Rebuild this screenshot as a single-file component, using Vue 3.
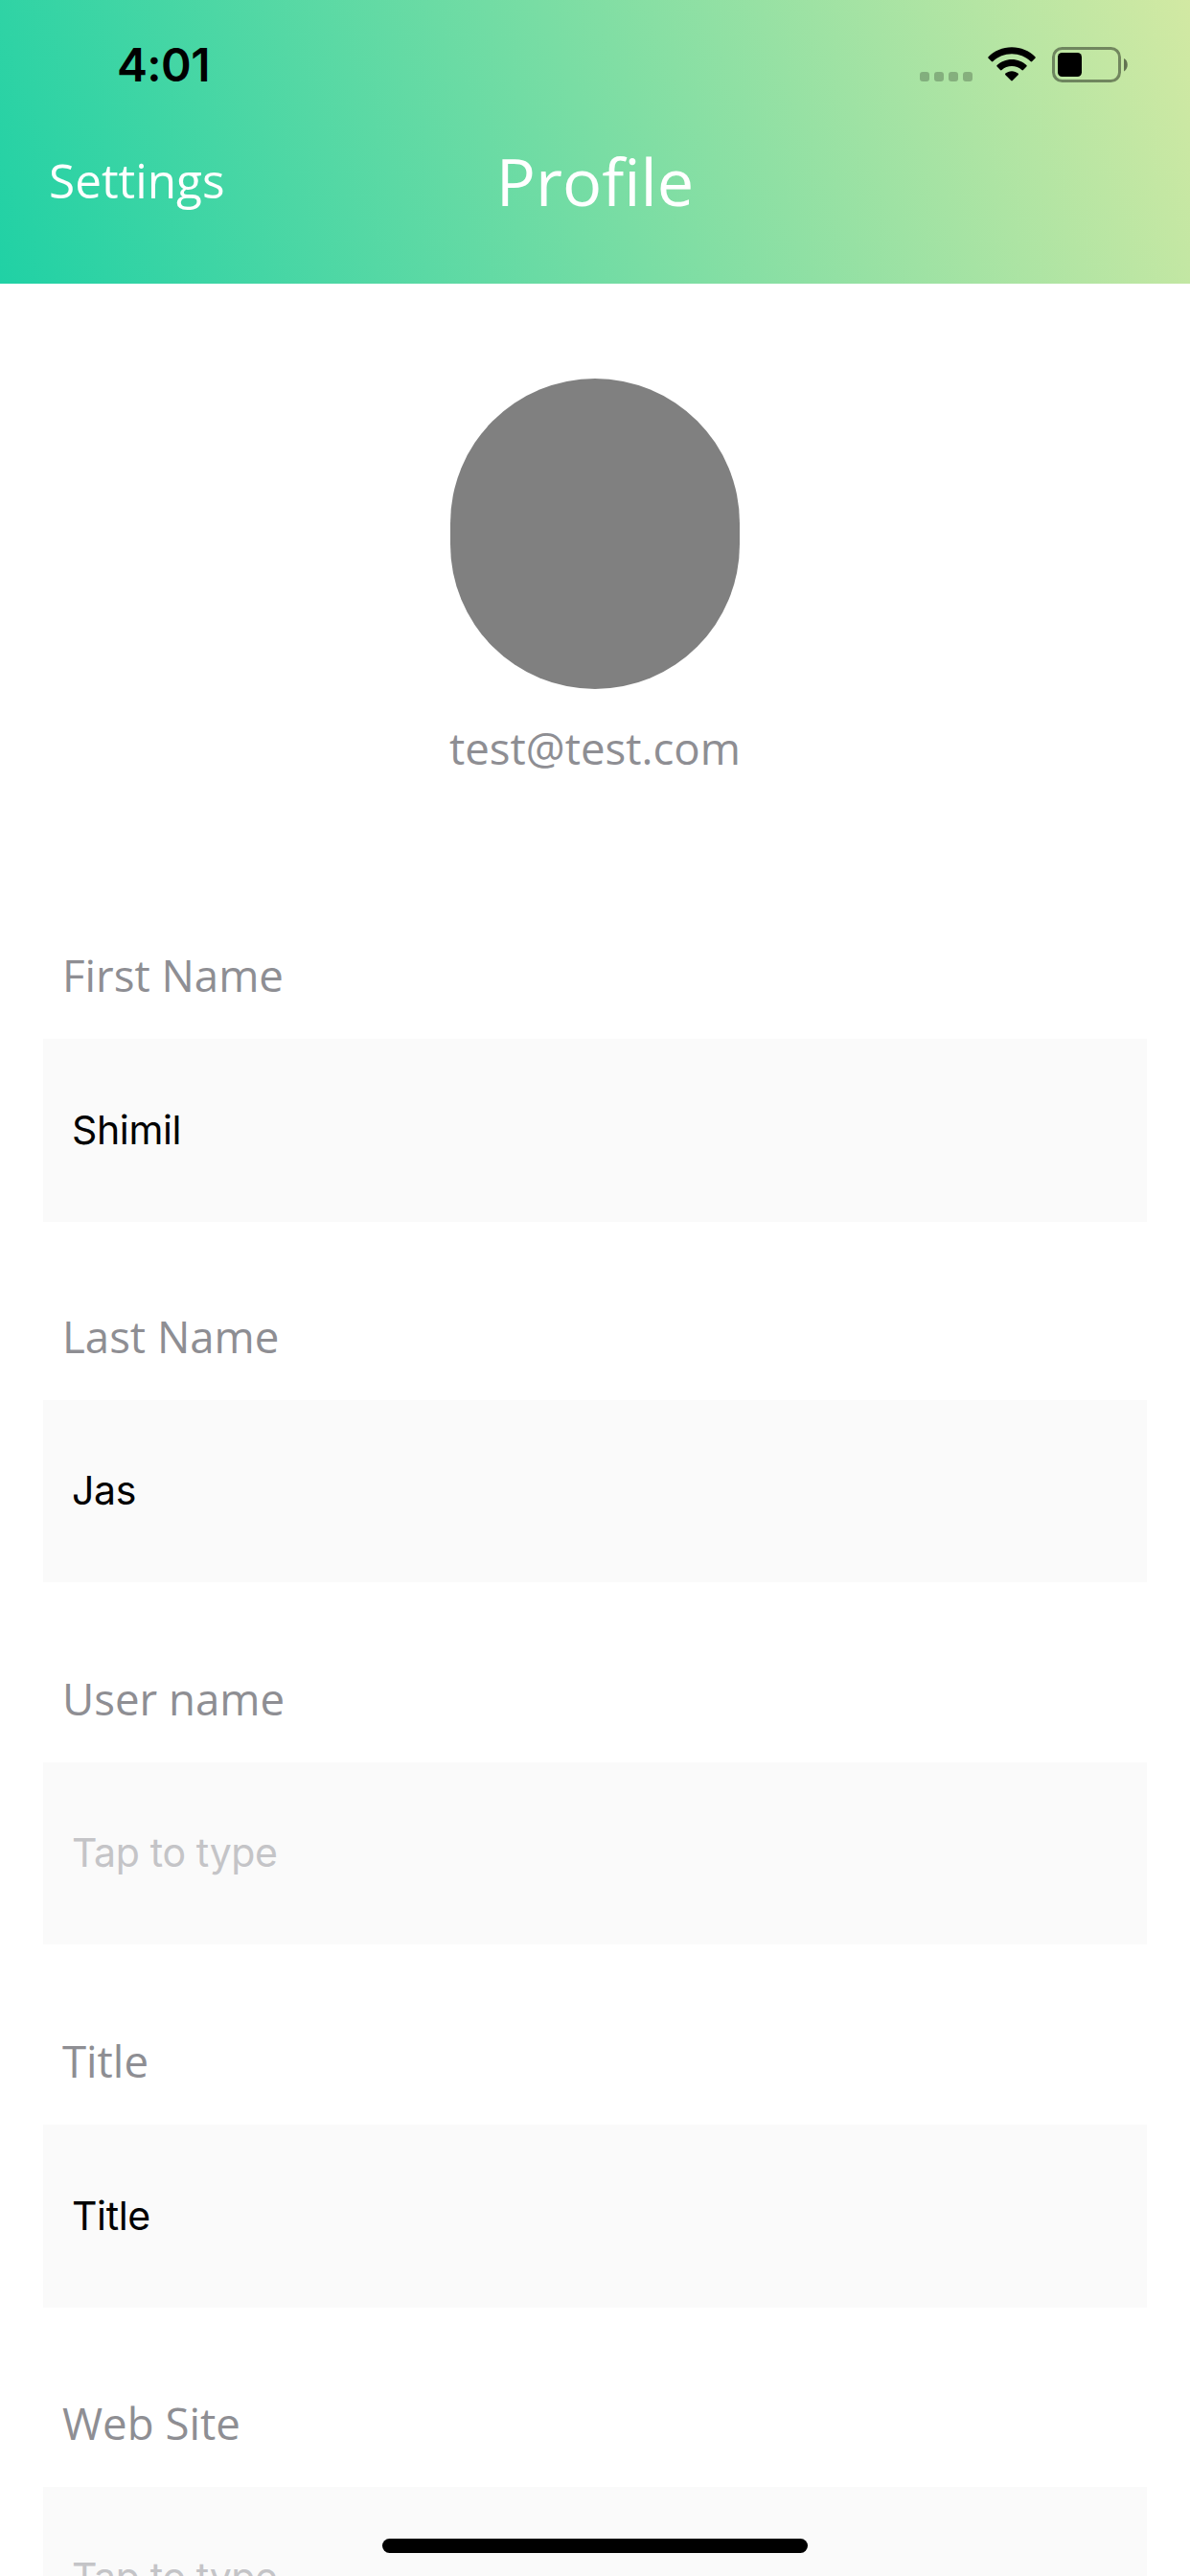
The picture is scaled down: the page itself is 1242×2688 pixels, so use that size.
<script setup>
const fields = [
  { label: 'First Name', value: 'Shimil' },
  { label: 'Last Name', value: 'Jas' },
  { label: 'User name', value: '' },
  { label: 'Title', value: 'Title' },
  { label: 'Web Site', value: '' }
]
const signalDots = 4
</script>

<template>
  <div class="screen">
    <header class="header">
      <div class="status">
        <span class="time">4:01</span>
        <div class="indicators">
          <div class="signal"><i v-for="n in signalDots" :key="n"></i></div>
          <svg class="wifi" width="50" height="36" viewBox="0 0 50 36">
            <path d="M25 0.2C34.6 0.2 43.2 4 49.4 10.2Q50.2 11 49.4 11.8L46.2 15Q45.4 15.8 44.6 15C39.500 10.200 32.600 7.300 25 7.300S10.500 10.200 5.400 15Q4.600 15.800 3.800 15L0.600 11.800Q-0.200 11 0.600 10.200C6.800 4 15.400 0.200 25 0.200Z" />
            <path d="M25 12.900C31 12.900 36.400 15.200 40.400 19Q41.200 19.800 40.400 20.600L37 24Q36.200 24.800 35.400 24C32.700 21.500 29 20 25 20S17.300 21.500 14.600 24Q13.800 24.800 13 24L9.600 20.600Q8.800 19.800 9.600 19C13.600 15.200 19 12.900 25 12.900Z" />
            <path d="M25 25.200C27.600 25.200 29.800 26.100 31.600 27.600Q32.400 28.400 31.600 29.200L25.800 35Q25 35.800 24.200 35L18.400 29.200Q17.600 28.400 18.400 27.600C20.200 26.100 22.400 25.200 25 25.200Z" />
          </svg>
          <svg class="battery" width="80" height="38" viewBox="0 0 80 38">
            <rect x="1.500" y="1.500" width="69" height="34" rx="9" fill="none" stroke="#000" stroke-opacity="0.420" stroke-width="3" />
            <rect x="6" y="6" width="25" height="25" rx="4.500" />
            <path d="M75 12C80 14 80 23 75 25.500Z" fill-opacity="0.500" />
          </svg>
        </div>
      </div>
      <nav class="nav">
        <a class="settings">Settings</a>
        <h1 class="title">Profile</h1>
      </nav>
    </header>

    <section class="profile">
      <div class="avatar"></div>
      <p class="email">test@test.com</p>
    </section>

    <main class="form">
      <div v-for="f in fields" :key="f.label" class="field">
        <div class="label">{{ f.label }}</div>
        <div class="box" :class="{ empty: !f.value }"><span>{{ f.value || 'Tap to type' }}</span></div>
      </div>
    </main>

    <div class="home-bar"></div>
  </div>
</template>

<style>
body {
  margin: 0;
  background: #fff;
}
</style>

<style scoped>
.screen {
  position: relative;
  width: 1242px;
  height: 2688px;
  overflow: hidden;
  background: #fff;
  font-family: "Open Sans", sans-serif;
}
.header {
  box-sizing: border-box;
  height: 296px;
  background: linear-gradient(68deg, #20d1a5, #d2e9a3);
}
.status {
  display: flex;
  justify-content: space-between;
  height: 132px;
  padding: 0 64px 0 122px;
}
.time {
  margin-top: 40px;
  font: 600 48px/56px Inter, sans-serif;
  letter-spacing: -0.6px;
}
.indicators {
  display: flex;
  align-items: flex-start;
}
.signal {
  display: flex;
  gap: 5px;
  margin: 75px 16px 0 0;
}
.signal i {
  width: 10px;
  height: 10px;
  border-radius: 3px;
  background: rgba(0, 0, 0, 0.23);
}
.wifi {
  margin: 49px 17px 0 0;
}
.battery {
  margin-top: 49px;
}
.nav {
  display: grid;
  grid-template-columns: 1fr auto 1fr;
  align-items: start;
  padding: 0 51px;
  color: #fff;
}
.settings {
  margin-top: 21px;
  font-size: 49.5px;
  line-height: 70px;
}
.title {
  margin: 10px 0 0;
  font-size: 68.5px;
  line-height: 94px;
  font-weight: 400;
  font-variant-ligatures: none;
}
.profile {
  display: flex;
  flex-direction: column;
  align-items: center;
  box-sizing: border-box;
  height: 665px;
  padding-top: 99px;
}
.avatar {
  width: 302px;
  height: 324px;
  border-radius: 151px;
  background: #808080;
}
.email {
  margin: 29px 0 0;
  font-size: 45.6px;
  line-height: 64px;
  color: #8e8e93;
}
.form {
  padding: 0 45px;
}
.field {
  height: 378px;
}
.field:first-child {
  height: 377px;
}
.label {
  box-sizing: border-box;
  height: 123px;
  padding: 24px 0 0 20px;
  font-size: 45.6px;
  line-height: 64px;
  color: #8e8e93;
}
.box {
  display: flex;
  align-items: center;
  box-sizing: border-box;
  height: 190px;
  padding: 0 31px 2px 30px;
  background: #fafafa;
  font: 400 41px/50px Inter, sans-serif;
  letter-spacing: -0.35px;
  color: #000;
}
.field:nth-child(3n + 1) .box {
  height: 191px;
}
.box.empty {
  color: #c4c4c7;
}
.home-bar {
  position: absolute;
  left: 399px;
  top: 2649px;
  width: 444px;
  height: 15px;
  border-radius: 8px;
  background: #000;
}
</style>
